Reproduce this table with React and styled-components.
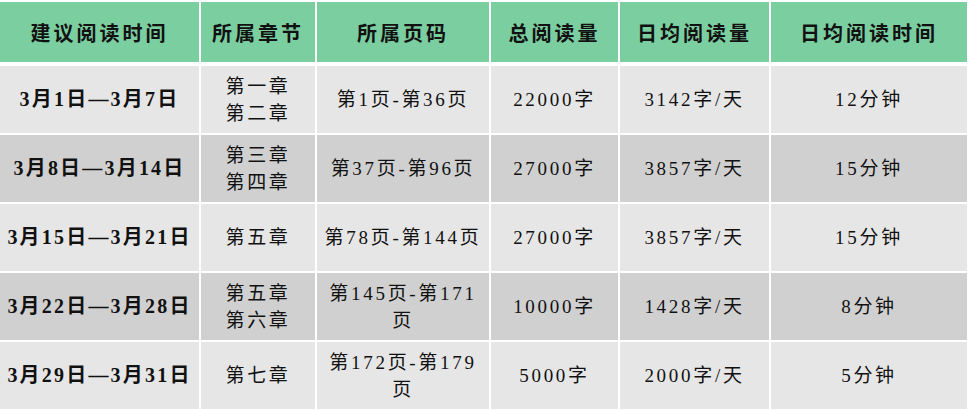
import React from "react";
import styled, { createGlobalStyle } from "styled-components";

const Global = createGlobalStyle`
  html, body { margin: 0; padding: 0; background: #ffffff; }
  body { width: 968px; height: 410px; overflow: hidden; }
`;

const Table = styled.div`
  display: grid;
  grid-template-columns: 199px 114px 172px 127px 149px 196px;
  grid-template-rows: 62px;
  grid-auto-rows: 67px;
  column-gap: 2px;
  row-gap: 2px;
  padding-top: 2px;
  width: 967px;
  font-family: "Liberation Serif", "Noto Sans CJK SC", serif;
  color: #111;
`;

const HeaderCell = styled.div`
  background: #7bcea0;
  display: flex;
  align-items: center;
  justify-content: center;
  font-size: 20px;
  font-weight: 700;
  letter-spacing: 3px;
  margin-bottom: 2px;
`;

const Cell = styled.div`
  background: ${(p) => (p.$shade ? "#d0d0d0" : "#e6e6e6")};
  display: flex;
  flex-direction: column;
  align-items: center;
  justify-content: center;
  text-align: center;
  font-size: ${(p) => (p.$bold ? "20px" : "19px")};
  line-height: 27px;
  font-weight: ${(p) => (p.$bold ? 700 : 400)};
  letter-spacing: ${(p) => (p.$bold ? "2.2px" : "2.7px")};
`;

const Line = styled.span`
  display: block;
  white-space: nowrap;
`;

const headers = ["建议阅读时间", "所属章节", "所属页码", "总阅读量", "日均阅读量", "日均阅读时间"];

const rows = [
  [["3月1日—3月7日"], ["第一章", "第二章"], ["第1页-第36页"], ["22000字"], ["3142字/天"], ["12分钟"]],
  [["3月8日—3月14日"], ["第三章", "第四章"], ["第37页-第96页"], ["27000字"], ["3857字/天"], ["15分钟"]],
  [["3月15日—3月21日"], ["第五章"], ["第78页-第144页"], ["27000字"], ["3857字/天"], ["15分钟"]],
  [["3月22日—3月28日"], ["第五章", "第六章"], ["第145页-第171", "页"], ["10000字"], ["1428字/天"], ["8分钟"]],
  [["3月29日—3月31日"], ["第七章"], ["第172页-第179", "页"], ["5000字"], ["2000字/天"], ["5分钟"]],
];

export default function App() {
  return (
    <>
      <Global />
      <Table>
        {headers.map((h) => (
          <HeaderCell key={h}>{h}</HeaderCell>
        ))}
        {rows.map((row, ri) =>
          row.map((lines, ci) => (
            <Cell key={`${ri}-${ci}`} $shade={ri % 2 === 1} $bold={ci === 0}>
              {lines.map((l, li) => (
                <Line key={li}>{l}</Line>
              ))}
            </Cell>
          ))
        )}
      </Table>
    </>
  );
}
